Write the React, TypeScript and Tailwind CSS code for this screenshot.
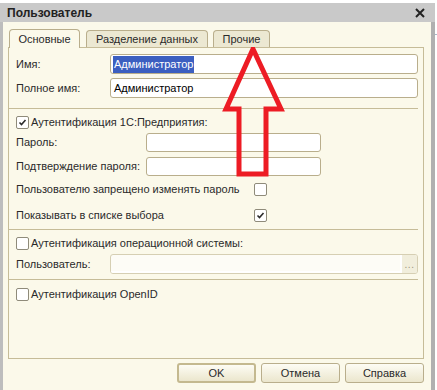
import React from "react";

const font = { fontFamily: '"Liberation Sans", Arial, sans-serif' };

function Check({ checked }: { checked?: boolean }) {
  return (
    <span className="w-[13px] h-[13px] shrink-0 rounded-[2px] border border-[#8f8b7a] bg-white flex items-center justify-center">
      {checked && (
        <svg width="9" height="9" viewBox="0 0 9 9">
          <polyline points="1.5,4.5 3.5,6.5 7.5,2" fill="none" stroke="#2b2b2b" strokeWidth="1.6" />
        </svg>
      )}
    </span>
  );
}

function Field({ children }: { children?: React.ReactNode }) {
  return (
    <div className="flex-1 h-full rounded-[3px] border border-[#b9ae8c] bg-white flex items-center pl-[2px] text-[11px] text-black">
      {children}
    </div>
  );
}

function Sep({ mt }: { mt: string }) {
  return <div className={`h-px bg-[#c6bc98] mr-[5px] ${mt}`} />;
}

function Btn({ label, main }: { label: string; main?: boolean }) {
  return (
    <button
      type="button"
      className={`w-[79px] h-[20px] rounded-[3px] bg-gradient-to-b from-[#fdfcf4] to-[#ebe6cd] text-[11px] text-[#2a2a2a] flex items-center justify-center ${
        main ? "border-2 border-[#c4b98f]" : "border border-[#b9ae8c]"
      }`}
    >
      {label}
    </button>
  );
}

export default function App() {
  return (
    <div className="w-[437px] h-[390px] bg-white relative overflow-hidden text-[#2a2a2a] flex" style={font}>
      <div className="mt-[3px] w-[435px] h-[387px] flex flex-col">
        <div className="h-[19px] bg-[#c9c9c9] flex items-center justify-between pl-[7px] pr-[10px]">
          <span className="text-[12px] font-bold text-[#222]">Пользователь</span>
          <svg width="10" height="10" viewBox="0 0 10 10">
            <path d="M1 1 L9 9 M9 1 L1 9" stroke="#222" strokeWidth="2" />
          </svg>
        </div>
        <div className="flex-1 bg-[#fbf9ea] border-l-[3px] border-l-[#bdbdbd] border-r-[4px] border-r-[#b0b0b0]">
          <div className="flex items-end h-[25px] pl-[6px] relative z-10">
            <div className="w-[71px] h-[19px] -mb-px rounded-t-[4px] border border-b-0 border-[#b9ae8c] bg-[#fbf9ea] flex items-center justify-center text-[11px]">
              Основные
            </div>
            <div className="ml-[6px] w-[122px] h-[17px] rounded-t-[4px] border border-b-0 border-[#b9ae8c] bg-[#ece8d2] flex items-center justify-center text-[11px]">
              Разделение данных
            </div>
            <div className="ml-[5px] w-[57px] h-[17px] rounded-t-[4px] border border-b-0 border-[#b9ae8c] bg-[#ece8d2] flex items-center justify-center text-[11px]">
              Прочие
            </div>
          </div>
          <div className="ml-[5px] w-[416px] h-[312px] border border-[#c6bc98] text-[11px]">
            <div className="mt-[6px] h-[20px] flex items-center pl-[7px] pr-[5px]">
              <span className="w-[94px]">Имя:</span>
              <Field>
                <span className="bg-[#3c5fc0] text-white px-px leading-[17px]">Администратор</span>
              </Field>
            </div>
            <div className="mt-[4px] h-[20px] flex items-center pl-[7px] pr-[5px]">
              <span className="w-[94px]">Полное имя:</span>
              <Field>
                <span className="px-px">Администратор</span>
              </Field>
            </div>
            <Sep mt="mt-[10px]" />
            <div className="mt-[3px] h-[20px] flex items-center gap-[2px] pl-[7px]">
              <Check checked />
              <span>Аутентификация 1С:Предприятия:</span>
            </div>
            <div className="h-[19px] mt-px flex items-center pl-[7px]">
              <span className="w-[130px]">Пароль:</span>
              <div className="w-[175px] h-full">
                <Field />
              </div>
            </div>
            <div className="h-[19px] mt-[5px] flex items-center pl-[7px]">
              <span className="w-[130px]">Подтверждение пароля:</span>
              <div className="w-[175px] h-full">
                <Field />
              </div>
            </div>
            <div className="mt-[3px] h-[20px] flex items-center pl-[7px]">
              <span className="w-[238px]">Пользователю запрещено изменять пароль</span>
              <Check />
            </div>
            <div className="mt-[6px] h-[20px] flex items-center pl-[7px]">
              <span className="w-[238px]">Показывать в списке выбора</span>
              <Check checked />
            </div>
            <Sep mt="mt-[4px]" />
            <div className="mt-[3px] h-[20px] flex items-center gap-[2px] pl-[7px]">
              <Check />
              <span>Аутентификация операционной системы:</span>
            </div>
            <div className="mt-px h-[20px] flex items-center pl-[7px] pr-[5px]">
              <span className="w-[94px]">Пользователь:</span>
              <div className="flex-1 h-full rounded-[3px] border border-[#d6cfb3] bg-[#fdfcf6] flex overflow-hidden">
                <div className="flex-1 border-b-2 border-r-2 border-white" />
                <div className="w-[15px] bg-[#f1eedc] flex items-end justify-center pb-[3px]">
                  <span className="text-[10px] leading-none text-[#9a9480] tracking-[0.5px]">...</span>
                </div>
              </div>
            </div>
            <Sep mt="mt-[5px]" />
            <div className="mt-[4px] h-[20px] flex items-center gap-[2px] pl-[7px]">
              <Check />
              <span>Аутентификация OpenID</span>
            </div>
          </div>
          <div className="ml-[5px] w-[416px] mt-[4px] flex justify-end gap-[5px]">
            <Btn label="OK" main />
            <Btn label="Отмена" />
            <Btn label="Справка" />
          </div>
        </div>
      </div>
      <div className="flex-1 flex flex-col">
        <div className="mt-[34px] h-px bg-[#a9b8c8]" />
      </div>
      <svg className="absolute left-0 top-0 pointer-events-none" width="437" height="390">
        <polygon
          points="253,49 281,109 266,109 266,174 239,174 239,109 226,109"
          fill="none"
          stroke="#ed1c24"
          strokeWidth="5"
        />
      </svg>
    </div>
  );
}
